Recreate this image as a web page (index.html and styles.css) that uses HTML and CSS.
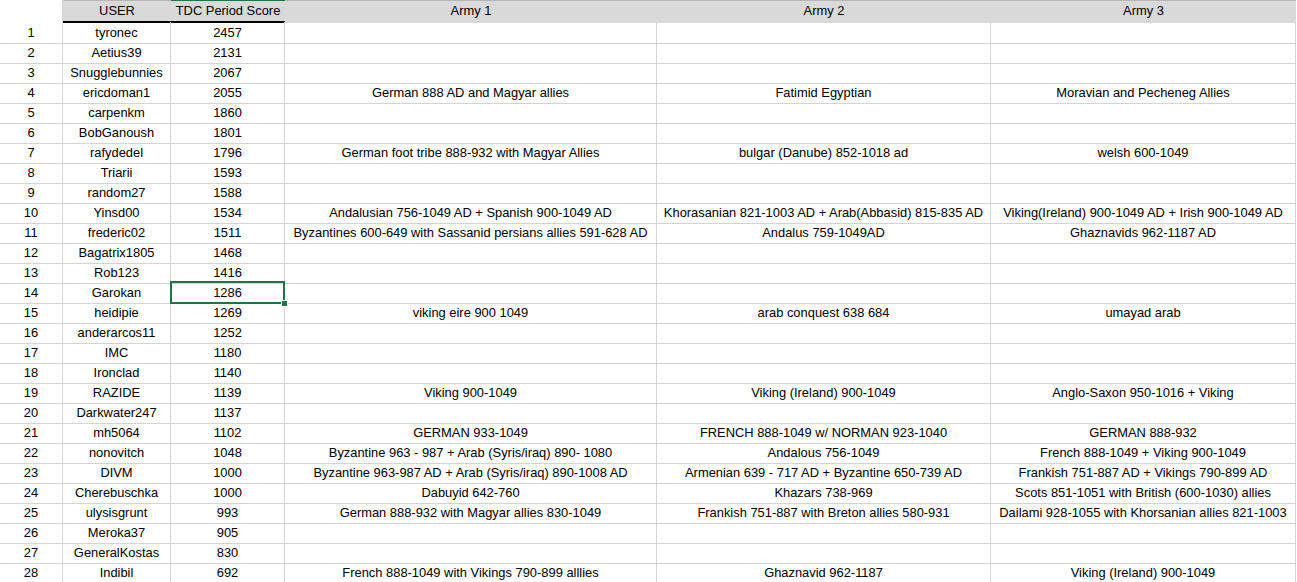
FILE: index.html
```html
<!DOCTYPE html>
<html>
<head>
<meta charset="utf-8">
<link rel="stylesheet" href="styles.css">
</head>
<body>
<div class="sheet">
  <div class="row head">
    <div class="c rh"></div>
    <div class="c hb">USER</div>
    <div class="c hb active">TDC Period Score</div>
    <div class="c ha">Army 1</div>
    <div class="c ha">Army 2</div>
    <div class="c ha">Army 3</div>
  </div>
  <div class="row"><div class="c rh">1</div><div class="c">tyronec</div><div class="c">2457</div><div class="c"></div><div class="c"></div><div class="c"></div></div>
  <div class="row"><div class="c rh">2</div><div class="c">Aetius39</div><div class="c">2131</div><div class="c"></div><div class="c"></div><div class="c"></div></div>
  <div class="row"><div class="c rh">3</div><div class="c">Snugglebunnies</div><div class="c">2067</div><div class="c"></div><div class="c"></div><div class="c"></div></div>
  <div class="row"><div class="c rh">4</div><div class="c">ericdoman1</div><div class="c">2055</div><div class="c">German 888 AD and Magyar allies</div><div class="c">Fatimid Egyptian</div><div class="c">Moravian and Pecheneg Allies</div></div>
  <div class="row"><div class="c rh">5</div><div class="c">carpenkm</div><div class="c">1860</div><div class="c"></div><div class="c"></div><div class="c"></div></div>
  <div class="row"><div class="c rh">6</div><div class="c">BobGanoush</div><div class="c">1801</div><div class="c"></div><div class="c"></div><div class="c"></div></div>
  <div class="row"><div class="c rh">7</div><div class="c">rafydedel</div><div class="c">1796</div><div class="c">German foot tribe 888-932 with Magyar Allies</div><div class="c">bulgar (Danube) 852-1018 ad</div><div class="c">welsh 600-1049</div></div>
  <div class="row"><div class="c rh">8</div><div class="c">Triarii</div><div class="c">1593</div><div class="c"></div><div class="c"></div><div class="c"></div></div>
  <div class="row"><div class="c rh">9</div><div class="c">random27</div><div class="c">1588</div><div class="c"></div><div class="c"></div><div class="c"></div></div>
  <div class="row"><div class="c rh">10</div><div class="c">Yinsd00</div><div class="c">1534</div><div class="c">Andalusian 756-1049 AD + Spanish 900-1049 AD</div><div class="c">Khorasanian 821-1003 AD + Arab(Abbasid) 815-835 AD</div><div class="c">Viking(Ireland) 900-1049 AD + Irish 900-1049 AD</div></div>
  <div class="row"><div class="c rh">11</div><div class="c">frederic02</div><div class="c">1511</div><div class="c">Byzantines 600-649 with Sassanid persians allies 591-628 AD</div><div class="c">Andalus 759-1049AD</div><div class="c">Ghaznavids 962-1187 AD</div></div>
  <div class="row"><div class="c rh">12</div><div class="c">Bagatrix1805</div><div class="c">1468</div><div class="c"></div><div class="c"></div><div class="c"></div></div>
  <div class="row"><div class="c rh">13</div><div class="c">Rob123</div><div class="c">1416</div><div class="c"></div><div class="c"></div><div class="c"></div></div>
  <div class="row"><div class="c rh">14</div><div class="c">Garokan</div><div class="c sel">1286<span class="selbox"></span><span class="handle"></span></div><div class="c"></div><div class="c"></div><div class="c"></div></div>
  <div class="row"><div class="c rh">15</div><div class="c">heidipie</div><div class="c">1269</div><div class="c">viking eire 900 1049</div><div class="c">arab conquest 638 684</div><div class="c">umayad arab</div></div>
  <div class="row"><div class="c rh">16</div><div class="c">anderarcos11</div><div class="c">1252</div><div class="c"></div><div class="c"></div><div class="c"></div></div>
  <div class="row"><div class="c rh">17</div><div class="c">IMC</div><div class="c">1180</div><div class="c"></div><div class="c"></div><div class="c"></div></div>
  <div class="row"><div class="c rh">18</div><div class="c">Ironclad</div><div class="c">1140</div><div class="c"></div><div class="c"></div><div class="c"></div></div>
  <div class="row"><div class="c rh">19</div><div class="c">RAZIDE</div><div class="c">1139</div><div class="c">Viking 900-1049</div><div class="c">Viking (Ireland) 900-1049</div><div class="c">Anglo-Saxon 950-1016 + Viking</div></div>
  <div class="row"><div class="c rh">20</div><div class="c">Darkwater247</div><div class="c">1137</div><div class="c"></div><div class="c"></div><div class="c"></div></div>
  <div class="row"><div class="c rh">21</div><div class="c">mh5064</div><div class="c">1102</div><div class="c">GERMAN 933-1049</div><div class="c">FRENCH 888-1049 w/ NORMAN 923-1040</div><div class="c">GERMAN 888-932</div></div>
  <div class="row"><div class="c rh">22</div><div class="c">nonovitch</div><div class="c">1048</div><div class="c">Byzantine 963 - 987 + Arab (Syris/iraq) 890- 1080</div><div class="c">Andalous 756-1049</div><div class="c">French 888-1049 + Viking 900-1049</div></div>
  <div class="row"><div class="c rh">23</div><div class="c">DIVM</div><div class="c">1000</div><div class="c">Byzantine 963-987 AD + Arab (Syris/iraq) 890-1008 AD</div><div class="c">Armenian 639 - 717 AD + Byzantine 650-739 AD</div><div class="c">Frankish 751-887 AD + Vikings 790-899 AD</div></div>
  <div class="row"><div class="c rh">24</div><div class="c">Cherebuschka</div><div class="c">1000</div><div class="c">Dabuyid 642-760</div><div class="c">Khazars 738-969</div><div class="c">Scots 851-1051 with British (600-1030) allies</div></div>
  <div class="row"><div class="c rh">25</div><div class="c">ulysisgrunt</div><div class="c">993</div><div class="c">German 888-932 with Magyar allies 830-1049</div><div class="c">Frankish 751-887 with Breton allies 580-931</div><div class="c">Dailami 928-1055 with Khorsanian allies 821-1003</div></div>
  <div class="row"><div class="c rh">26</div><div class="c">Meroka37</div><div class="c">905</div><div class="c"></div><div class="c"></div><div class="c"></div></div>
  <div class="row"><div class="c rh">27</div><div class="c">GeneralKostas</div><div class="c">830</div><div class="c"></div><div class="c"></div><div class="c"></div></div>
  <div class="row"><div class="c rh">28</div><div class="c">Indibil</div><div class="c">692</div><div class="c">French 888-1049 with Vikings 790-899 alllies</div><div class="c">Ghaznavid 962-1187</div><div class="c">Viking (Ireland) 900-1049</div></div>
</div>
</body>
</html>
```
FILE: styles.css
```css
html, body {
  margin: 0;
  padding: 0;
  background: #ffffff;
}
body {
  font-family: "Liberation Sans", Arial, sans-serif;
  font-size: 12.9px;
  color: #000000;
  overflow: hidden;
}
.sheet {
  width: 1297px;
}
.row {
  display: grid;
  grid-template-columns: 63px 108px 114px 372px 334px 305px;
  height: 20px;
}
.c {
  box-sizing: border-box;
  border-right: 1px solid #d4d4d4;
  border-bottom: 1px solid #d4d4d4;
  text-align: center;
  line-height: 21px;
  white-space: nowrap;
  overflow: visible;
}
.row.head {
  height: 22px;
}
.head .c {
  line-height: 20px;
  border-right: none;
  border-top: 1px solid #b5b5b5;
  border-bottom: 2px solid #d9d9d9;
  background: #d9d9d9;
}
.head .c.rh {
  background: #ffffff;
  border-top: 1px solid #ffffff;
  border-bottom: 2px solid #ffffff;
  border-right: 1px solid #d4d4d4;
}
.head .c.hb {
  border-bottom: 2px solid #000000;
}
.head .c.active {
  border-top: 1px solid #217346;
}
.c.sel {
  position: relative;
}
.selbox {
  position: absolute;
  left: -1px;
  top: -1px;
  right: -1px;
  bottom: -1px;
  border: 2px solid #217346;
  box-sizing: border-box;
}
.handle {
  position: absolute;
  right: -4px;
  bottom: -4px;
  width: 5px;
  height: 5px;
  background: #217346;
  border: 1px solid #ffffff;
}
```
